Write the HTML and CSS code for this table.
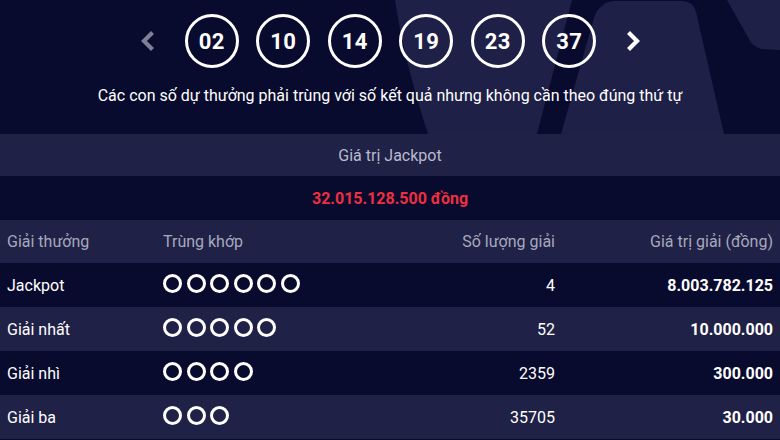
FILE: index.html
```html
<!DOCTYPE html>
<html lang="vi">
<head>
<meta charset="utf-8">
<link rel="stylesheet" href="styles.css">
</head>
<body>
<div class="page">
  <section class="hero">
    <svg class="hero-bg" width="780" height="134" viewBox="0 0 780 134" aria-hidden="true">
      <path d="M395,0 L572,0 L537,134 L428,134 Q404,60 395,0 Z" fill="#1e2047"/>
      <path d="M602,6 Q606,1 616,1 L682,1 Q693,1 696,12 L724,134 L561,134 L594,18 Q597,9 602,6 Z" fill="#1e2047"/>
      <path d="M727,0 L780,0 L780,50 L762,49 Q752,47 748,37 Z" fill="#1e2047"/>
    </svg>
    <div class="balls-row">
      <span class="chev chev-left">
        <svg width="15" height="20" viewBox="0 0 15 20"><polyline points="12,3 5,10 12,17" fill="none" stroke="#7d7f95" stroke-width="4.2" stroke-linecap="square"/></svg>
      </span>
      <div class="balls">
        <span class="ball">02</span>
        <span class="ball">10</span>
        <span class="ball">14</span>
        <span class="ball">19</span>
        <span class="ball">23</span>
        <span class="ball">37</span>
      </div>
      <span class="chev chev-right">
        <svg width="15" height="20" viewBox="0 0 15 20"><polyline points="3,3 10,10 3,17" fill="none" stroke="#ffffff" stroke-width="4.2" stroke-linecap="square"/></svg>
      </span>
    </div>
    <p class="caption">Các con số dự thưởng phải trùng với số kết quả nhưng không cần theo đúng thứ tự</p>
  </section>

  <div class="jp-label">Giá trị Jackpot</div>
  <div class="jp-value">32.015.128.500 đồng</div>

  <div class="prize-table">
    <div class="row head">
      <span>Giải thưởng</span>
      <span>Trùng khớp</span>
      <span class="num">Số lượng giải</span>
      <span class="num">Giá trị giải (đồng)</span>
    </div>
    <div class="row dark">
      <span>Jackpot</span>
      <span class="dots"><i></i><i></i><i></i><i></i><i></i><i></i></span>
      <span class="num">4</span>
      <span class="num strong">8.003.782.125</span>
    </div>
    <div class="row light">
      <span>Giải nhất</span>
      <span class="dots"><i></i><i></i><i></i><i></i><i></i></span>
      <span class="num">52</span>
      <span class="num strong">10.000.000</span>
    </div>
    <div class="row dark">
      <span>Giải nhì</span>
      <span class="dots"><i></i><i></i><i></i><i></i></span>
      <span class="num">2359</span>
      <span class="num strong">300.000</span>
    </div>
    <div class="row light">
      <span>Giải ba</span>
      <span class="dots"><i></i><i></i><i></i></span>
      <span class="num">35705</span>
      <span class="num strong">30.000</span>
    </div>
  </div>
</div>
</body>
</html>
```

FILE: styles.css
```css
* { box-sizing: border-box; }
html, body { margin: 0; padding: 0; }
body {
  background: #090b2e;
  font-family: Roboto, "Noto Sans", "Liberation Sans", sans-serif;
  color: #ffffff;
  width: 780px;
  height: 440px;
  overflow: hidden;
}
.page { width: 780px; }

.hero {
  position: relative;
  height: 134px;
  background: #090b2e;
  padding-top: 14px;
  display: flex;
  flex-direction: column;
  align-items: center;
  overflow: hidden;
}
.hero-bg {
  position: absolute;
  left: 0;
  top: 0;
  z-index: 0;
}
.balls-row {
  position: relative;
  z-index: 1;
  display: flex;
  align-items: center;
  gap: 31px;
  margin-left: 1px;
}
.chev { display: flex; width: 15px; height: 20px; }
.balls { display: flex; gap: 17.5px; }
.ball {
  width: 54px;
  height: 54px;
  border: 3px solid #ffffff;
  border-radius: 50%;
  display: flex;
  align-items: center;
  justify-content: center;
  font-size: 22px;
  font-weight: 700;
  color: #ffffff;
  letter-spacing: 0.3px;
}
.caption {
  position: relative;
  z-index: 1;
  margin: 18px 0 0;
  font-size: 16px;
  line-height: 20px;
  color: #ffffff;
}

.jp-label {
  height: 42px;
  background: #1f2147;
  color: #b9bbcc;
  font-size: 16px;
  display: flex;
  align-items: center;
  justify-content: center;
}
.jp-value {
  height: 44px;
  background: #090b2e;
  color: #ee2f3f;
  font-size: 16px;
  font-weight: 700;
  display: flex;
  align-items: center;
  justify-content: center;
}

.row {
  display: grid;
  grid-template-columns: 156px 272px 120px 218px;
  padding: 0 7px;
  height: 44px;
  align-items: center;
  font-size: 16px;
}
.row.head {
  height: 43px;
  background: #1f2147;
  color: #a7a9bd;
}
.row.dark { background: #090b2e; }
.row.light { background: #1f2147; }
.num { text-align: right; }
.strong { font-weight: 700; }

.dots { display: flex; gap: 4.5px; margin-top: -3px; }
.dots i {
  display: block;
  width: 19px;
  height: 19px;
  border: 3px solid #ffffff;
  border-radius: 50%;
}
```
